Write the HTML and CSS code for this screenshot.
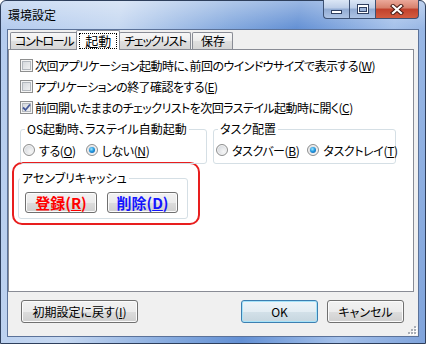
FILE: index.html
```html
<!DOCTYPE html>
<html lang="ja">
<head>
    <meta charset="UTF-8">
    <title>環境設定</title>
    <link rel="stylesheet" href="styles.css">
</head>
<body>
    <div class="window">
        <div class="titlebar">
            <span class="title">環境設定</span>
            <div class="caption">
                <span class="cap cap-min">
                    <svg width="13" height="6" viewBox="0 0 13 6"><rect x="1.5" y="1.5" width="10" height="3" fill="#fff" stroke="#2f3f60"/></svg>
                </span>
                <span class="cap cap-max">
                    <svg width="12" height="10" viewBox="0 0 12 10"><rect x="0.5" y="0.5" width="11" height="9" fill="#fff" stroke="#2f3f60"/><rect x="2.5" y="3.5" width="7" height="4" fill="#9db4d9" stroke="#2f3f60"/></svg>
                </span>
                <span class="cap cap-close">
                    <svg width="14" height="11" viewBox="0 0 14 11"><path d="M3 2 L11 9 M11 2 L3 9" stroke="#4a1d16" stroke-width="4.2" stroke-linecap="square"/><path d="M3 2 L11 9 M11 2 L3 9" stroke="#fff" stroke-width="2.2" stroke-linecap="square"/></svg>
                </span>
            </div>
        </div>
        <div class="client">
            <div class="tabs">
                <span class="tab">コントロール</span>
                <span class="tab active"><span class="focus">起動</span></span>
                <span class="tab">チェックリスト</span>
                <span class="tab tab-save">保存</span>
            </div>
            <div class="panel">
                <label class="check"><span class="cb"></span><span>次回アプリケーション起動時に、前回のウインドウサイズで表示する(<u>W</u>)</span></label>
                <label class="check"><span class="cb"></span><span>アプリケーションの終了確認をする(<u>E</u>)</span></label>
                <label class="check"><span class="cb">
                    <svg width="9" height="9" viewBox="0 0 9 9"><path d="M1 4.5 L3.5 7 L8 1.5" fill="none" stroke="#45599a" stroke-width="1.8"/></svg>
                </span><span>前回開いたままのチェックリストを次回ラステイル起動時に開く(<u>C</u>)</span></label>

                <div class="groups">
                    <fieldset class="group os">
                        <legend>OS起動時、ラステイル自動起動</legend>
                        <div class="radios">
                            <label class="radio"><span class="rb"></span><span>する(<u>O</u>)</span></label>
                            <label class="radio"><span class="rb on"></span><span>しない(<u>N</u>)</span></label>
                        </div>
                    </fieldset>
                    <fieldset class="group task">
                        <legend>タスク配置</legend>
                        <div class="radios">
                            <label class="radio"><span class="rb"></span><span>タスクバー(<u>B</u>)</span></label>
                            <label class="radio"><span class="rb on"></span><span>タスクトレイ(<u>T</u>)</span></label>
                        </div>
                    </fieldset>
                </div>

                <div class="mark">
                    <fieldset class="group cache">
                        <legend>アセンブリキャッシュ</legend>
                        <div class="cache-buttons">
                            <button class="btn big red">登録(<u>R</u>)</button>
                            <button class="btn big blue">削除(<u>D</u>)</button>
                        </div>
                    </fieldset>
                </div>
            </div>
            <div class="footer">
                <button class="btn reset">初期設定に戻す(<u>I</u>)</button>
                <button class="btn ok default">OK</button>
                <button class="btn cancel">キャンセル</button>
            </div>
            <svg class="grip" width="10" height="10" viewBox="0 0 10 10">
                <rect x="8" y="2" width="2" height="2" fill="#fff"/><rect x="7" y="1" width="2" height="2" fill="#a9aeb6"/>
                <rect x="8" y="5" width="2" height="2" fill="#fff"/><rect x="7" y="4" width="2" height="2" fill="#a9aeb6"/>
                <rect x="5" y="5" width="2" height="2" fill="#fff"/><rect x="4" y="4" width="2" height="2" fill="#a9aeb6"/>
                <rect x="8" y="8" width="2" height="2" fill="#fff"/><rect x="7" y="7" width="2" height="2" fill="#a9aeb6"/>
                <rect x="5" y="8" width="2" height="2" fill="#fff"/><rect x="4" y="7" width="2" height="2" fill="#a9aeb6"/>
                <rect x="2" y="8" width="2" height="2" fill="#fff"/><rect x="1" y="7" width="2" height="2" fill="#a9aeb6"/>
            </svg>
        </div>
    </div>
</body>
</html>
```

FILE: styles.css
```css
* {
    margin: 0;
    padding: 0;
    box-sizing: border-box;
}
body {
    width: 426px;
    height: 344px;
    overflow: hidden;
    background: #fff;
    font: 12px "Noto Sans CJK JP", sans-serif;
    font-feature-settings: "palt";
    color: #000;
}
u {
    text-underline-offset: 1px;
}
.window {
    width: 426px;
    height: 344px;
    display: flex;
    flex-direction: column;
    border: 1px solid #2e3f5c;
    border-radius: 6px 6px 0 0;
    padding: 0 6px 6px;
    background:
        linear-gradient(rgba(255, 255, 255, 0.35), rgba(255, 255, 255, 0) 28px),
        linear-gradient(100deg, #b3cbee 0%, #c6d8f1 25%, #84a9de 48%, #6390d4 62%, #a5c1ea 82%, #7fa3db 100%);
}

/* title bar */
.titlebar {
    height: 28px;
    display: flex;
    align-items: flex-start;
}
.title {
    margin: 7px 0 0 1px;
    line-height: 14px;
    font-size: 12px;
}
.caption {
    display: flex;
    margin: -1px 0 0 auto;
}
.cap {
    height: 19px;
    display: flex;
    align-items: center;
    justify-content: center;
    border: 1px solid #3d5173;
    border-top: none;
}
.cap-min,
.cap-max {
    background: linear-gradient(#dbe6f5 0%, #bccde8 45%, #91abd3 50%, #aec4e5 100%);
}
.cap-min {
    width: 26px;
    border-right: none;
    border-radius: 0 0 0 4px;
}
.cap-min svg {
    margin-top: 5px;
}
.cap-max {
    width: 27px;
}
.cap-close {
    width: 43px;
    border-left: none;
    border-radius: 0 0 4px 0;
    background: linear-gradient(#eba99a 0%, #d6806b 45%, #c1412c 50%, #d35c40 100%);
}

/* client */
.client {
    flex: 1;
    display: flex;
    flex-direction: column;
    position: relative;
    background: #f0f0f0;
    border: 1px solid #5b7299;
}
.tabs {
    height: 19px;
    display: flex;
    align-items: flex-end;
    padding-left: 2px;
    position: relative;
    z-index: 1;
    white-space: nowrap;
}
.tab {
    height: 17px;
    padding: 0 4px;
    line-height: 16px;
    letter-spacing: -1.3px;
    border: 1px solid #898c95;
    border-bottom: none;
    border-radius: 2px 2px 0 0;
    background: linear-gradient(#f7f7f7 0%, #ececec 50%, #e0e0e0 50%, #d6d6d6 100%);
}
.tab + .tab {
    margin-left: 1px;
}
.tab-save {
    padding: 0 7px 0 8px;
    letter-spacing: 0;
}
.tab.active {
    height: 20px;
    margin: 0 -2px -1px;
    padding: 2px 2px 0;
    background: #fff;
    position: relative;
}
.focus {
    display: block;
    padding: 0 5px;
    line-height: 14px;
    letter-spacing: 0;
    border: 1px dotted #000;
    font-size: 13px;
}
.panel {
    flex: 1;
    margin-right: 4px;
    padding: 5px 0 0 11px;
    background: #fff;
    border: 1px solid #898c95;
    white-space: nowrap;
}
.check {
    display: flex;
    align-items: center;
    height: 21px;
    gap: 2px;
    letter-spacing: -0.55px;
}
.cb {
    width: 13px;
    height: 13px;
    display: flex;
    align-items: center;
    justify-content: center;
    border: 1px solid #8e8f8f;
    background: linear-gradient(135deg, #cfd3d8, #f6f6f6);
    box-shadow: inset 0 0 0 1px #f4f4f4, inset 0 0 0 2px #b3b8be;
}

/* group boxes */
.groups {
    display: flex;
    gap: 6px;
    margin-top: 3px;
}
fieldset {
    min-width: 0;
    border: 1px solid #d5dfe5;
    border-radius: 3px;
    padding: 0 2px 5px;
}
legend {
    margin-left: 2px;
    padding: 0 2px;
    line-height: 16px;
}
.os {
    width: 187px;
}
.task {
    width: 183px;
}
.radios {
    display: flex;
    align-items: center;
    height: 16px;
    margin-top: 5px;
    letter-spacing: -0.4px;
}
.radio {
    display: flex;
    align-items: center;
    gap: 4px;
}
.radio + .radio {
    margin-left: 10px;
}
.task .radio + .radio {
    margin-left: 8px;
}
.rb {
    width: 12px;
    height: 12px;
    display: flex;
    align-items: center;
    justify-content: center;
    border: 1px solid #8e8f8f;
    border-radius: 50%;
    background: radial-gradient(circle at 65% 65%, #f6f6f6 0%, #dcdfe3 60%, #c3c7cd 100%);
    box-shadow: inset 0 0 0 1px #f4f4f4;
}
.rb.on::after {
    content: "";
    width: 6px;
    height: 6px;
    border-radius: 50%;
    background: radial-gradient(circle at 40% 35%, #9fe6ff 0%, #239ae0 45%, #0c4f9c 100%);
}

/* highlighted cache box */
.mark {
    width: 188px;
    margin: -2px 0 0 -8px;
    padding: 6px 10px 4px 4px;
    border: 2px solid #e81e1e;
    border-radius: 10px;
}
.cache legend {
    margin-left: -1px;
}
.cache-buttons {
    display: flex;
    gap: 10px;
    margin-top: 6px;
    padding-left: 4px;
}

/* buttons */
.btn {
    height: 23px;
    font: 12px "Noto Sans CJK JP", sans-serif;
    font-feature-settings: "palt";
    color: #000;
    white-space: nowrap;
    border: 1px solid #707070;
    border-radius: 3px;
    background: linear-gradient(#f2f2f2 0%, #ebebeb 50%, #dddddd 50%, #cfcfcf 100%);
    box-shadow: inset 0 0 0 1px #fbfbfb;
}
.btn.default {
    border-color: #3c7fb1;
    box-shadow: inset 0 0 0 1px #a6e3f9;
    background: linear-gradient(#eef5f9 0%, #e3edf3 50%, #d3e1e9 50%, #c6d6df 100%);
}
.big {
    height: 21px;
    font-size: 15px;
    font-weight: bold;
    line-height: 1;
}
.big.red {
    width: 72px;
    color: #f00;
}
.big.blue {
    width: 71px;
    color: #1414ff;
}
.footer {
    height: 44px;
    display: flex;
    align-items: flex-start;
    padding: 8px 14px 0 13px;
}
.reset {
    width: 117px;
}
.ok {
    width: 77px;
    margin-left: auto;
}
.cancel {
    width: 77px;
    margin-left: 9px;
}
.grip {
    position: absolute;
    right: 1px;
    bottom: 1px;
}
```
